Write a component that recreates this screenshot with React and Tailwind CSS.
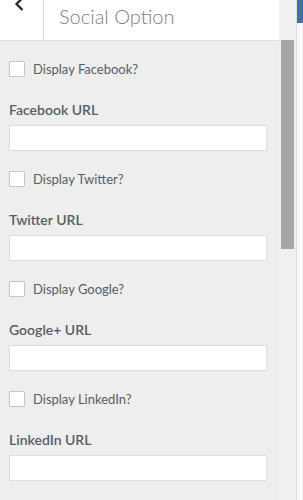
const networks = [
  { toggle: "Display Facebook?", label: "Facebook URL" },
  { toggle: "Display Twitter?", label: "Twitter URL" },
  { toggle: "Display Google?", label: "Google+ URL" },
  { toggle: "Display LinkedIn?", label: "LinkedIn URL" },
];

const font = { fontFamily: '"Lato", "Noto Sans", sans-serif' };

const SocialField = ({ toggle, label }) => (
  <div className="flex flex-col">
    <label className="flex items-center h-[16px] gap-[8px]">
      <span className="w-[16px] h-[16px] bg-white border border-[#c4c7ca] rounded-[1px] shrink-0" />
      <span className="text-[13px] text-[#555d66] leading-[16px]">{toggle}</span>
    </label>
    <div className="mt-[23px] h-[20px] leading-[20px] text-[14px] font-semibold text-[#555d66]">
      {label}
    </div>
    <input
      type="text"
      className="mt-[5px] w-[258px] h-[26px] bg-white border border-[#dddddd] outline-none"
    />
  </div>
);

export default function App() {
  return (
    <div className="w-[303px] h-[500px] flex overflow-hidden bg-[#f5f5f5]" style={font}>
      <div className="w-[279px] flex flex-col shrink-0">
        <div className="h-[41px] bg-white border-b border-[#dddddd] flex shrink-0">
          <button className="w-[44px] h-[40px] border-r border-[#dddddd] relative shrink-0">
            <svg
              className="absolute left-[14px] top-[-4px]"
              width="12"
              height="16"
              viewBox="0 0 12 16"
              fill="none"
            >
              <path d="M8.5 2 L2.5 8 L8.5 14" stroke="#222" strokeWidth="2.2" />
            </svg>
          </button>
          <div className="pl-[15px] text-[20px] font-light text-[#7b8086] leading-[32px]">
            Social Option
          </div>
        </div>
        <div className="flex-1 bg-[#eeeeee] px-[9px] pt-[20px] flex flex-col gap-[20px]">
          {networks.map((n) => (
            <SocialField key={n.label} {...n} />
          ))}
        </div>
      </div>
      <div className="w-[17px] bg-[#f0f0f0] shrink-0 pl-[2px] pt-[40px]">
        <div className="w-[13px] h-[209px] bg-[#a6a6a6]" />
      </div>
      <div className="w-px bg-[#dcdcdc] shrink-0" />
      <div className="flex-1 bg-[#fafafa]">
        <div className="h-[23px] bg-[#436f9f]" />
      </div>
    </div>
  );
}
